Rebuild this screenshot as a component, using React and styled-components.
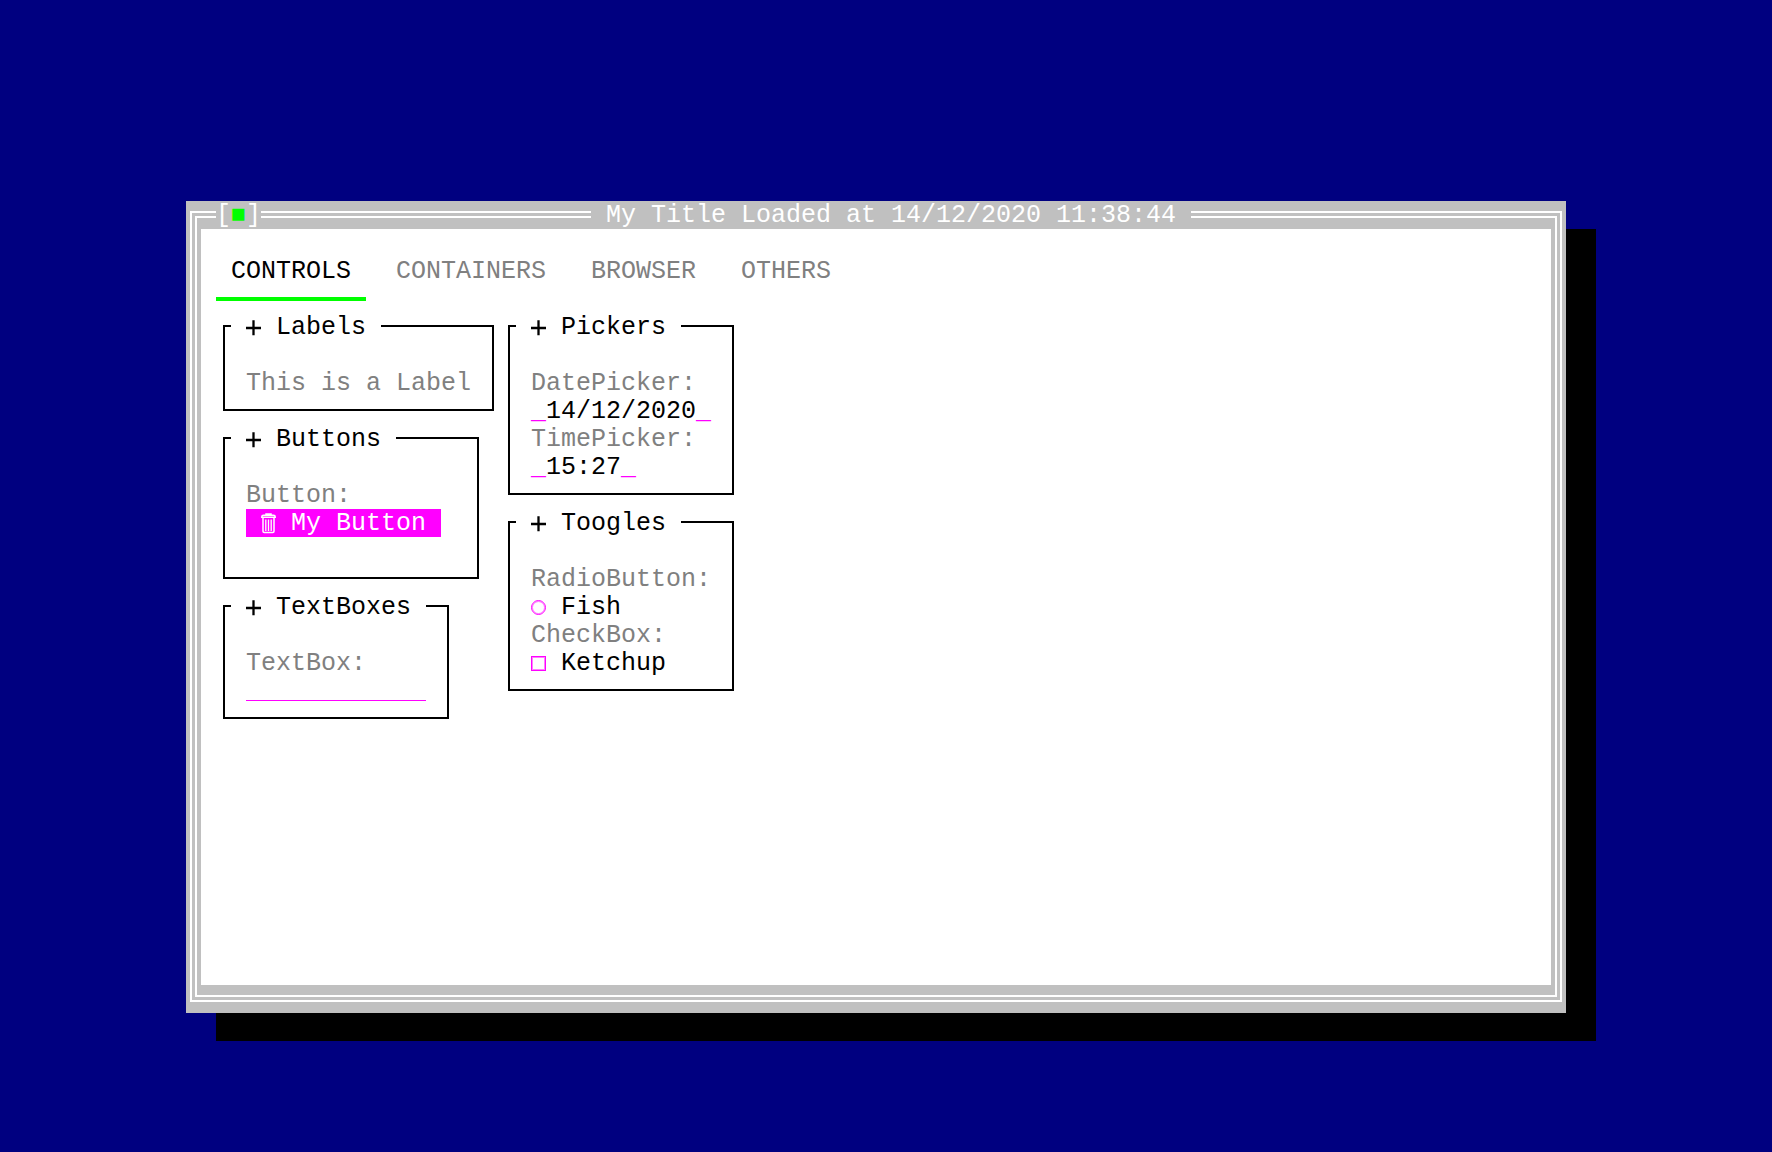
import React, { useState } from "react";
import styled, { createGlobalStyle } from "styled-components";

const GlobalStyle = createGlobalStyle`
  * { box-sizing: border-box; }
  body {
    margin: 0;
    background: #000080;
  }
  body, button, input {
    font-family: "Liberation Mono", monospace;
    font-size: 25px;
    line-height: 28px;
  }
`;

const Desktop = styled.div`
  display: flex;
  min-height: 100vh;
  padding: 201px 206px 139px 186px;
`;

const Window = styled.section`
  position: relative;
  display: flex;
  flex: 1;
  flex-direction: column;
  min-width: 0;
  padding: 0 15px 28px;
  background: #c0c0c0;
  box-shadow: 30px 28px 0 #000;

  &::before {
    content: "";
    position: absolute;
    inset: 10px 4px 11px;
    border: 7px double #fff;
    pointer-events: none;
  }
`;

const TitleBar = styled.header`
  position: relative;
  display: flex;
  height: 28px;
  padding: 1px 30px 0 15px;
  color: #fff;
`;

const CloseButton = styled.button`
  flex: none;
  padding: 0;
  border: 0;
  background: #c0c0c0;
  color: #fff;

  span { color: #0f0; }
`;

const Title = styled.h1`
  margin: 0 auto;
  padding: 0 15px;
  background: #c0c0c0;
  font-size: 25px;
  font-weight: 400;
  line-height: 28px;
`;

const Content = styled.main`
  position: relative;
  flex: 1;
  padding: 29px 15px 28px;
  background: #fff;
`;

const Tabs = styled.nav`
  display: flex;
  gap: 15px;
  margin-bottom: 12px;
`;

const Tab = styled.button`
  padding: 0 15px 11px;
  border: 0;
  border-bottom: 4px solid ${(p) => (p.$active ? "#0f0" : "transparent")};
  background: none;
  color: ${(p) => (p.$active ? "#000" : "#808080")};
`;

const Columns = styled.div`
  display: flex;
  align-items: flex-start;
`;

const Column = styled.div`
  display: flex;
  flex-direction: column;
  align-items: flex-start;
`;

const Group = styled.fieldset`
  display: flex;
  flex-direction: column;
  align-items: flex-start;
  min-width: 0;
  margin: -3px 7px 14px;
  padding: 28px 21px 11px;
  border: 2px solid #000;
`;

const Legend = styled.legend`
  margin-left: -15px;
  padding: 4px 15px 0;
`;

const LegendRow = styled.span`
  display: flex;
  align-items: center;
  gap: 15px;
  height: 28px;
`;

const Caption = styled.label`
  color: #808080;
`;

const ActionButton = styled.button`
  display: flex;
  align-items: center;
  gap: 15px;
  height: 28px;
  margin: -1px 15px 29px 0;
  padding: 2px 15px 0;
  border: 0;
  background: #f0f;
  color: #fff;
`;

const TextBox = styled.input`
  width: 180px;
  height: 23px;
  margin-bottom: 5px;
  padding: 0;
  border: 0;
  border-bottom: 1px solid #f0f;
  outline: 0;
  background: none;
`;

const Picker = styled.div`
  display: flex;
  color: #f0f;
`;

const PickerInput = styled.input`
  width: ${(p) => p.$chars * 15}px;
  height: 28px;
  padding: 0;
  border: 0;
  outline: 0;
  background: none;
  color: #000;
`;

const Option = styled.label`
  display: flex;
  align-items: center;
  gap: 15px;
`;

const Toggle = styled.input`
  appearance: none;
  width: 15px;
  height: 15px;
  margin: 0 0 1px;
  border: 1px solid #f0f;
  border-radius: ${(p) => (p.type === "radio" ? "50%" : "0")};
  box-shadow: inset 0 0 0 1px rgba(255, 0, 255, 0.5);

  &:checked {
    background: #f0f;
  }
`;

const PlusIcon = () => (
  <svg width="15" height="28" viewBox="0 0 15 28" aria-hidden="true">
    <path d="M0 14H15M7.5 6.3V21.3" stroke="#000" strokeWidth="2.3" />
  </svg>
);

const TrashIcon = () => (
  <svg width="15" height="28" viewBox="0 0 15 28" fill="none" stroke="#fff" aria-hidden="true">
    <path d="M0.8 8V6.8Q0.8 5.2 2.4 5.2H12.6Q14.2 5.2 14.2 6.8V8M0.8 7.3H14.2M5 4.6V4H10V4.6" strokeWidth="1.5" />
    <path d="M2 8V21.2Q2 22.4 3.2 22.4H11.8Q13 22.4 13 21.2V8" strokeWidth="1.5" />
    <path d="M4.8 9.5V21M7.5 9.5V21M10.2 9.5V21" strokeWidth="1.3" />
  </svg>
);

const GroupBox = ({ title, children }) => (
  <Group>
    <Legend>
      <LegendRow><PlusIcon />{title}</LegendRow>
    </Legend>
    {children}
  </Group>
);

const PickerField = ({ id, label, initial }) => {
  const [value, setValue] = useState(initial);
  return (
    <>
      <Caption htmlFor={id}>{label}</Caption>
      <Picker>
        <span aria-hidden="true">_</span>
        <PickerInput id={id} $chars={initial.length} value={value} onChange={(e) => setValue(e.target.value)} />
        <span aria-hidden="true">_</span>
      </Picker>
    </>
  );
};

const TABS = ["CONTROLS", "CONTAINERS", "BROWSER", "OTHERS"];

export default function App() {
  const [active, setActive] = useState(TABS[0]);
  return (
    <>
      <GlobalStyle />
      <Desktop>
        <Window>
          <TitleBar>
            <CloseButton aria-label="Close">[<span>■</span>]</CloseButton>
            <Title>My Title Loaded at 14/12/2020 11:38:44</Title>
          </TitleBar>
          <Content>
            <Tabs>
              {TABS.map((name) => (
                <Tab key={name} $active={name === active} onClick={() => setActive(name)}>{name}</Tab>
              ))}
            </Tabs>
            <Columns>
              <Column>
                <GroupBox title="Labels">
                  <Caption as="span">This is a Label</Caption>
                </GroupBox>
                <GroupBox title="Buttons">
                  <Caption htmlFor="my-button">Button:</Caption>
                  <ActionButton id="my-button"><TrashIcon />My Button</ActionButton>
                </GroupBox>
                <GroupBox title="TextBoxes">
                  <Caption htmlFor="textbox">TextBox:</Caption>
                  <TextBox id="textbox" type="text" />
                </GroupBox>
              </Column>
              <Column>
                <GroupBox title="Pickers">
                  <PickerField id="date" label="DatePicker:" initial="14/12/2020" />
                  <PickerField id="time" label="TimePicker:" initial="15:27" />
                </GroupBox>
                <GroupBox title="Toogles">
                  <Caption as="span">RadioButton:</Caption>
                  <Option><Toggle type="radio" name="food" />Fish</Option>
                  <Caption as="span">CheckBox:</Caption>
                  <Option><Toggle type="checkbox" />Ketchup</Option>
                </GroupBox>
              </Column>
            </Columns>
          </Content>
        </Window>
      </Desktop>
    </>
  );
}
